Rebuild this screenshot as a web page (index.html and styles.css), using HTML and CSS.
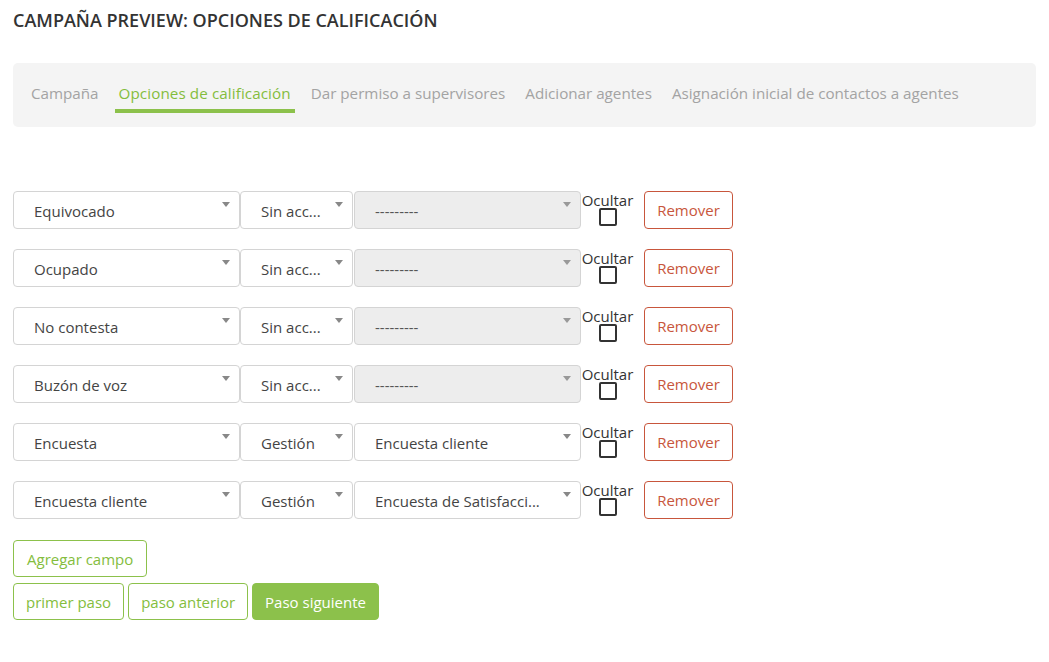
FILE: index.html
```html
<!DOCTYPE html>
<html lang="es">
<head>
  <meta charset="UTF-8">
  <meta name="viewport" content="width=device-width, initial-scale=1.0">
  <title>Campaña preview</title>
  <link rel="stylesheet" href="styles.css">
</head>
<body>
  <h1 class="title">CAMPAÑA PREVIEW: OPCIONES DE CALIFICACIÓN</h1>
  <nav class="steps">
    <a class="step">Campaña</a>
    <a class="step active">Opciones de calificación</a>
    <a class="step">Dar permiso a supervisores</a>
    <a class="step">Adicionar agentes</a>
    <a class="step">Asignación inicial de contactos a agentes</a>
  </nav>

  <form class="options">
    <div class="row">
      <div class="sel sel-wide">Equivocado</div>
      <div class="sel sel-narrow">Sin acc...</div>
      <div class="sel sel-wide disabled">---------</div>
      <label class="hide"><span>Ocultar</span><i class="box"></i></label>
      <button type="button" class="btn btn-danger">Remover</button>
    </div>
    <div class="row">
      <div class="sel sel-wide">Ocupado</div>
      <div class="sel sel-narrow">Sin acc...</div>
      <div class="sel sel-wide disabled">---------</div>
      <label class="hide"><span>Ocultar</span><i class="box"></i></label>
      <button type="button" class="btn btn-danger">Remover</button>
    </div>
    <div class="row">
      <div class="sel sel-wide">No contesta</div>
      <div class="sel sel-narrow">Sin acc...</div>
      <div class="sel sel-wide disabled">---------</div>
      <label class="hide"><span>Ocultar</span><i class="box"></i></label>
      <button type="button" class="btn btn-danger">Remover</button>
    </div>
    <div class="row">
      <div class="sel sel-wide">Buzón de voz</div>
      <div class="sel sel-narrow">Sin acc...</div>
      <div class="sel sel-wide disabled">---------</div>
      <label class="hide"><span>Ocultar</span><i class="box"></i></label>
      <button type="button" class="btn btn-danger">Remover</button>
    </div>
    <div class="row">
      <div class="sel sel-wide">Encuesta</div>
      <div class="sel sel-narrow">Gestión</div>
      <div class="sel sel-wide">Encuesta cliente</div>
      <label class="hide"><span>Ocultar</span><i class="box"></i></label>
      <button type="button" class="btn btn-danger">Remover</button>
    </div>
    <div class="row">
      <div class="sel sel-wide">Encuesta cliente</div>
      <div class="sel sel-narrow">Gestión</div>
      <div class="sel sel-wide">Encuesta de Satisfacci...</div>
      <label class="hide"><span>Ocultar</span><i class="box"></i></label>
      <button type="button" class="btn btn-danger">Remover</button>
    </div>

    <div class="actions">
      <button type="button" class="btn btn-outline btn-add">Agregar campo</button>
    </div>
    <div class="actions">
      <button type="button" class="btn btn-outline">primer paso</button>
      <button type="button" class="btn btn-outline">paso anterior</button>
      <button type="button" class="btn btn-primary">Paso siguiente</button>
    </div>
  </form>
</body>
</html>
```

FILE: styles.css
```css
html, body { margin:0;padding:0;background:#fff }
body { padding:0 13px;font-family:"Open Sans","Liberation Sans",sans-serif;color:#333 }
.title { margin:0;padding-top:8px;height:21px;font-size:18px;font-weight:600;color:#333;letter-spacing:0;white-space:nowrap }

.steps { margin-top:34px;height:64px;background:#f4f4f4;border-radius:5px;display:flex;align-items:center;padding:0 16px 5px 18px;box-sizing:border-box;gap:20px;font-size:15.2px }
.step { color:#a3a3a3;position:relative;line-height:20px }
.step.active { color:#84bd3d;letter-spacing:0.1px }
.step.active::after { content:"";position:absolute;left:-4px;right:-4px;bottom:-10px;height:4px;background:#8cc14b }

.options { margin-top:64px }
.row { display:flex;align-items:flex-start;margin-bottom:20px;height:38px }
.sel { position:relative;box-sizing:border-box;height:38px;border:1px solid #d4d4d4;border-radius:4px;background:#fff;padding:0 24px 0 20px;line-height:38px;font-size:15px;color:#444;white-space:nowrap;overflow:hidden }
.sel::after { content:"";position:absolute;right:9px;top:10px;border-left:4px solid transparent;border-right:4px solid transparent;border-top:5px solid #888 }
.sel-wide { width:227px }
.sel-narrow { width:113px;padding-left:20px;margin:0 1px 0 0 }
.sel.disabled { background:#ededed;color:#555 }
.sel.disabled::after { border-top-color:#999 }

.hide { width:53px;display:flex;flex-direction:column;align-items:center;margin-top:-1px;font-size:15px;color:#333;line-height:20px }
.box { display:block;width:14px;height:14px;border:2px solid #333;border-radius:2px;margin-top:-2px }

.btn { box-sizing:border-box;height:37px;padding:0 12px;border-radius:4px;background:#fff;font-family:inherit;font-size:15px;cursor:pointer }
.btn-danger { height:38px;margin-left:10px;border:1px solid #c8563c;color:#c8563c;width:89px }
.btn-outline { border:1px solid #8cc14b;color:#84bd3d }
.btn-add { padding:0 13px }
.btn-primary { border:1px solid #8cc14b;background:#8cc14b;color:#fff }

.actions { display:flex;gap:4px }
.actions + .actions { margin-top:6px }
.row + .actions { margin-top:21px }
```
